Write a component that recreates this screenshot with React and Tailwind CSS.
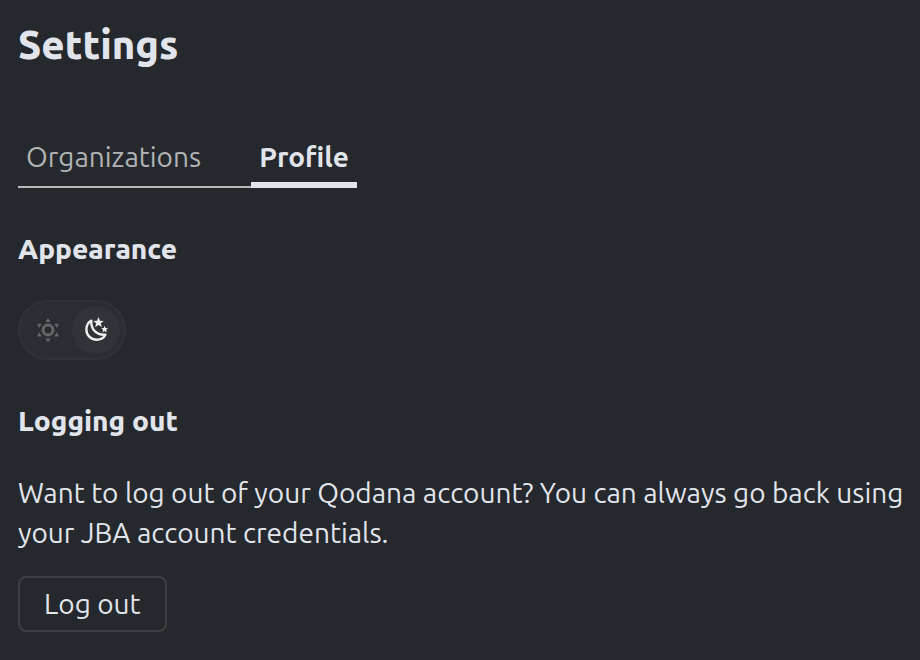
function Sun() {
  return (
    <svg viewBox="0 0 24 24" className="size-6 text-[#636669]" fill="none" stroke="currentColor" strokeWidth="3" aria-hidden="true">
      <circle cx="12" cy="12" r="5" />
      <path fill="currentColor" stroke="none" d="M12 0l2.800 4H9.200zM12 24.500l-2.800-4h5.600zM1 5.800h4.800L3.400 10zM23 5.800h-4.800l2.400 4.200zM1 18.500h4.800L3.400 14.300zM23 18.500h-4.800l2.400-4.200z" />
    </svg>
  );
}

function Moon() {
  return (
    <svg viewBox="0 0 24 24" className="size-6 overflow-visible text-[#eceef0]" fill="none" stroke="currentColor" strokeWidth="2.400" strokeLinejoin="round" aria-hidden="true">
      <path d="M7.300 2.600C3.800 4.500 2.400 8.200 2.400 11.500a10 10 0 0 0 10 10.200c4.300 0 7.600-2.200 9-5C13 17.500 6.800 12 7.300 2.600z" />
      <path fill="currentColor" stroke="none" d="M14.500-.9l1.400 3.600 3.800.2-2.900 2.400 1 3.700-3.300-2.100-3.300 2.100 1-3.700-2.900-2.400 3.800-.2zM20.600 7.800l.9 2.300 2.500.2-1.900 1.600.7 2.500-2.200-1.400-2.200 1.400.7-2.500-1.900-1.600 2.500-.2z" />
    </svg>
  );
}

export default function App() {
  return (
    <main className="min-h-screen bg-[#25282c] pt-5 pr-1 pb-5 pl-[18px] font-['Ubuntu','Noto_Sans',sans-serif] text-[28px] leading-10 text-[#e1e5eb]">
      <h1 className="text-[40px] leading-[50px] font-extrabold">Settings</h1>
      <div className="mt-[55px] flex w-fit border-b-2 border-[#b7b9bb]" role="tablist">
        <button type="button" role="tab" aria-selected="false" className="mr-[42px] px-2 pt-3 pb-[9px] text-[#b1b3b5]">Organizations</button>
        <button type="button" role="tab" aria-selected="true" className="-mb-0.5 border-b-[6px] border-[#e1e5eb] px-2 pt-3 pb-[5px] font-bold">Profile</button>
      </div>
      <h2 className="mt-[41px] font-extrabold">Appearance</h2>
      <fieldset className="mt-[31px] flex h-[60px] w-[108px] items-center rounded-full border-2 border-[#303337] bg-[#2a2d31] px-1">
        <label className="flex size-12 items-center justify-center rounded-full"><input className="sr-only" type="radio" name="theme" aria-label="Light" /><Sun /></label>
        <label className="flex size-12 items-center justify-center rounded-full bg-[#303337]"><input className="sr-only" type="radio" name="theme" aria-label="Dark" defaultChecked /><Moon /></label>
      </fieldset>
      <h2 className="mt-[41px] font-extrabold">Logging out</h2>
      <p className="mt-8">Want to log out of your Qodana account? You can always go back using your JBA account credentials.</p>
      <button type="button" className="mt-[23px] h-14 rounded-lg border-2 border-[#3d4043] px-6">Log out</button>
    </main>
  );
}
